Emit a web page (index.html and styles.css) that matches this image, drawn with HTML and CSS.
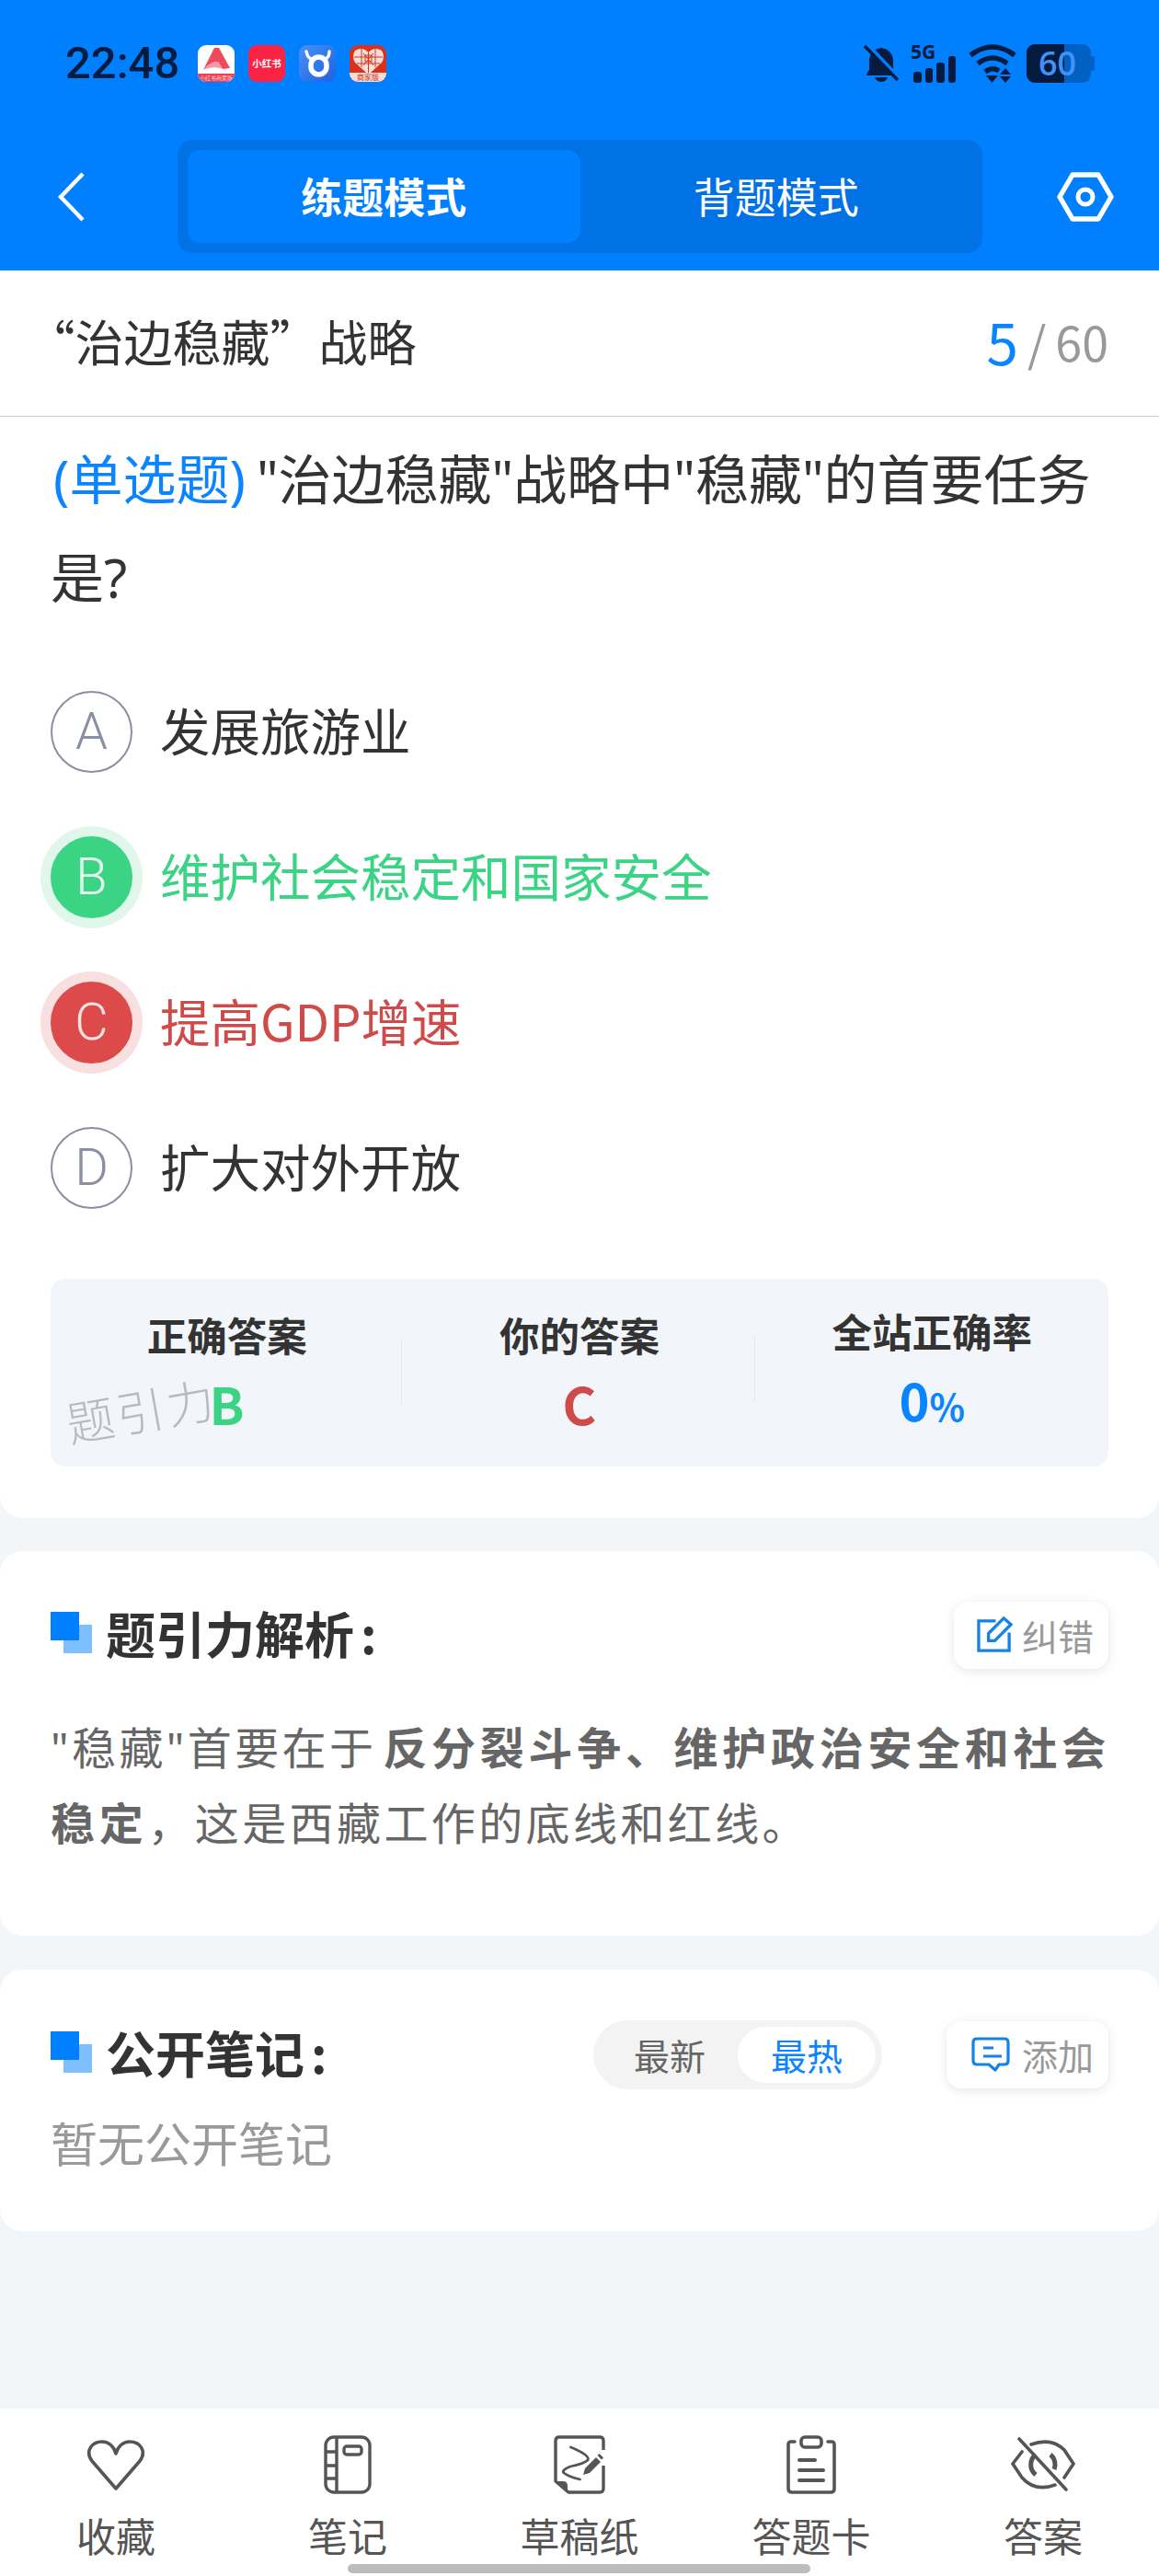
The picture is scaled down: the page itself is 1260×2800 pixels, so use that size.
FILE: index.html
```html
<!DOCTYPE html>
<html lang="zh-CN">
<head>
    <meta charset="UTF-8">
    <meta name="viewport" content="width=device-width, initial-scale=1.0">
    <title>练题模式</title>
    <link rel="stylesheet" href="styles.css">
</head>
<body>
<div class="app">
    <header class="top">
        <div class="status-bar">
            <span class="clock">22:48</span>
            <div class="app-icons">
                <span class="app-icon icon-shop">
                    <svg viewBox="0 0 40 40" width="40" height="40">
                        <path d="M6 27 L18 3 L23 3 L35 25 L27 26 L22 18 Q14 18 6 27Z" fill="#ee4a5c"/>
                        <path d="M6 27 Q14 17 22 18 L27 26 Q17 22 6 27Z" fill="#f79aa2"/>
                    </svg>
                    <span class="icon-caption">小红书商家版</span>
                </span>
                <span class="app-icon icon-red">小红书</span>
                <span class="app-icon icon-cow">
                    <svg viewBox="0 0 40 40" width="40" height="40">
                        <path d="M8 7 Q9 13 13 15 M33 7 Q33 13 29 15" fill="none" stroke="#fff" stroke-width="3.4" stroke-linecap="round"/>
                        <rect x="13" y="13" width="17" height="19" rx="8.5" fill="none" stroke="#fff" stroke-width="5.5"/>
                    </svg>
                </span>
                <span class="app-icon icon-pdd">
                    <svg viewBox="0 0 39 39" width="39" height="39">
                        <path d="M19.5 32 L5 19 Q1 12 5 6 Q13 1 19.5 8 Q26 1 34 6 Q38 12 34 19Z" fill="#f6dfd8"/>
                        <g stroke="#d8321f" stroke-width="1" fill="none">
                            <path d="M19.5 8 V32 M4 13 H35 M7 20 H32 M12 4 V24 M27 4 V24 M14 9 L25 22 M25 9 L14 22"/>
                            <rect x="16" y="11" width="7" height="7"/>
                        </g>
                    </svg>
                    <span class="icon-caption pdd-caption">商家版</span>
                </span>
            </div>
            <div class="status-icons">
                <svg class="bell" viewBox="0 0 38 42" width="38" height="42">
                    <path d="M3 34 Q3 31 6 28 V17 Q7 6 19 4 Q31 6 32 17 V28 Q35 31 35 34Z" fill="#021b3f"/>
                    <path d="M12 36 H26 Q24 41 19 41 Q14 41 12 36Z" fill="#021b3f"/>
                    <path d="M3 0 L38 37" stroke="#0080ff" stroke-width="5"/>
                    <path d="M1 2 L37 39" stroke="#021b3f" stroke-width="3.4"/>
                </svg>
                <div class="signal">
                    <span class="five-g">5G</span>
                    <div class="bars">
                        <i class="bar-1"></i><i class="bar-2"></i><i class="bar-3"></i><i class="bar-4"></i>
                    </div>
                </div>
                <svg class="wifi" viewBox="0 0 52 42" width="52" height="42">
                    <g fill="none" stroke="#021b3f" stroke-width="5.5">
                        <path d="M2 12 Q26 -6 50 12"/>
                        <path d="M10 21 Q26 9 42 21"/>
                        <path d="M18 30 Q26 24 33 29"/>
                    </g>
                    <path d="M19 34 H32 L25.5 42Z" fill="#021b3f"/>
                    <path d="M40 26 L46 33 H34Z M34 35 H46 L40 42Z" fill="#021b3f"/>
                </svg>
                <div class="battery">
                    <div class="battery-fill"></div>
                    <span class="battery-text">60</span>
                    <span class="battery-nub"></span>
                </div>
            </div>
        </div>
        <nav class="nav-bar">
            <svg class="back" viewBox="0 0 32 56" width="32" height="56">
                <path d="M28 3 L4 28 L28 53" fill="none" stroke="#fff" stroke-width="4.4"/>
            </svg>
            <div class="mode-tabs">
                <div class="mode-tab active">练题模式</div>
                <div class="mode-tab">背题模式</div>
            </div>
            <svg class="setting" viewBox="0 0 62 56" width="62" height="56">
                <path d="M17 4 H45 L59 28 L45 52 H17 L3 28Z" fill="none" stroke="#fff" stroke-width="5.4" stroke-linejoin="round"/>
                <circle cx="31" cy="28" r="8" fill="none" stroke="#fff" stroke-width="5"/>
            </svg>
        </nav>
    </header>

    <section class="card question-card">
        <div class="title-row">
            <span class="chapter"><span class="quote-open">“</span>治边稳藏”战略</span>
            <span class="progress"><b>5</b><i>/</i>60</span>
        </div>
        <p class="question"><span class="q-type">(单选题)</span> "治边稳藏"战略中"稳藏"的首要任务是?</p>
        <div class="options">
            <div class="option">
                <span class="mark">A</span>
                <span class="option-text">发展旅游业</span>
            </div>
            <div class="option right">
                <span class="mark">B</span>
                <span class="option-text">维护社会稳定和国家安全</span>
            </div>
            <div class="option wrong">
                <span class="mark">C</span>
                <span class="option-text">提高GDP增速</span>
            </div>
            <div class="option">
                <span class="mark">D</span>
                <span class="option-text">扩大对外开放</span>
            </div>
        </div>
        <div class="stats">
            <div class="stat">
                <div class="stat-label">正确答案</div>
                <div class="stat-value green">B</div>
            </div>
            <div class="stat">
                <div class="stat-label">你的答案</div>
                <div class="stat-value red">C</div>
            </div>
            <div class="stat">
                <div class="stat-label">全站正确率</div>
                <div class="stat-value blue">0<small>%</small></div>
            </div>
            <span class="watermark">题引力</span>
        </div>
    </section>

    <section class="card analysis-card">
        <div class="card-head">
            <h2 class="card-title"><span class="squares"></span>题引力解析<span class="colon">:</span></h2>
            <button class="small-btn fix-btn">
                <svg viewBox="0 0 40 40" width="39" height="39">
                    <path d="M21 5 H2 V38 H36 V18" fill="none" stroke="#1482e6" stroke-width="3.4"/>
                    <path d="M13 19 L30 2 L38 9 L20 27 H13Z" fill="none" stroke="#1482e6" stroke-width="3.4"/>
                </svg>
                纠错
            </button>
        </div>
        <p class="analysis">"稳藏"首要在于<b>反分裂斗争、维护政治安全和社会稳定</b>&#xFF0C;这是西藏工作的底线和红线。</p>
    </section>

    <section class="card notes-card">
        <div class="card-head">
            <h2 class="card-title"><span class="squares"></span>公开笔记<span class="colon">:</span></h2>
            <div class="notes-tools">
                <div class="sort-pill">
                    <span class="sort-item">最新</span>
                    <span class="sort-item active">最热</span>
                </div>
                <button class="small-btn add-btn">
                    <svg viewBox="0 0 42 38" width="42" height="38">
                        <path d="M6 2 H36 Q40 2 40 6 V26 Q40 30 36 30 H30 L26 36 L19 30 H6 Q2 30 2 26 V6 Q2 2 6 2Z" fill="none" stroke="#1482e6" stroke-width="3.2" stroke-linejoin="round"/>
                        <path d="M13 12 H24 M13 21 H33" stroke="#1482e6" stroke-width="3.2"/>
                    </svg>
                    添加
                </button>
            </div>
        </div>
        <p class="empty-notes">暂无公开笔记</p>
    </section>

    <footer class="tool-bar">
        <div class="tool">
            <svg viewBox="0 -2 64 56" width="64" height="56">
                <path d="M32 52 L6 22 C-2 11 6 1 17 1 C24 1 30 6 32 14 C34 6 40 1 47 1 C58 1 66 11 58 22Z" fill="none" stroke="#555" stroke-width="3.6" stroke-linejoin="round"/>
            </svg>
            <span>收藏</span>
        </div>
        <div class="tool">
            <svg viewBox="0 0 52 64" width="52" height="64">
                <rect x="2" y="2" width="48" height="60" rx="9" fill="none" stroke="#555" stroke-width="3.4"/>
                <path d="M14 2 V62 M2 18 H14 M2 33 H14 M2 47 H14" stroke="#555" stroke-width="3.4"/>
                <rect x="22" y="12" width="19" height="9" rx="3" fill="none" stroke="#555" stroke-width="3.4"/>
            </svg>
            <span>笔记</span>
        </div>
        <div class="tool">
            <svg viewBox="0 0 56 64" width="56" height="64">
                <path d="M54 16 V6 Q54 2 50 2 H6 Q2 2 2 6 V50 L16 62 H50 Q54 62 54 58 V33" fill="none" stroke="#555" stroke-width="3.4" stroke-linejoin="round"/>
                <path d="M2 50 H10 Q15 50 15 55 V62Z" fill="#555"/>
                <path d="M18.5 13 Q40 22 37 27 Q33 31 18 34 Q8 38 11 41 Q16 45 28.5 48" fill="none" stroke="#555" stroke-width="2.8" stroke-linecap="round"/>
                <path d="M32 43 L34 36 L46 24 L51 29 L39 41Z" fill="#555"/>
                <path d="M48.5 21 L53 25.5" stroke="#555" stroke-width="3"/>
            </svg>
            <span>草稿纸</span>
        </div>
        <div class="tool">
            <svg viewBox="0 0 56 64" width="56" height="64">
                <path d="M10 7 H6 Q3 7 3 10 V58 Q3 62 7 62 H49 Q53 62 53 58 V10 Q53 7 50 7 H46" fill="none" stroke="#555" stroke-width="3.6" stroke-linecap="round"/>
                <rect x="17" y="2" width="22" height="11" rx="4" fill="none" stroke="#555" stroke-width="3.6"/>
                <path d="M15 27 H32 M15 38 H41 M15 49 H41" stroke="#555" stroke-width="4" stroke-linecap="round"/>
            </svg>
            <span>答题卡</span>
        </div>
        <div class="tool">
            <svg viewBox="0 0 70 56" width="70" height="56">
                <path d="M22 6 Q44 -2 58 12 L68 27 L58 42 M48 50 Q26 58 12 42 L2 27 L12 14" fill="none" stroke="#555" stroke-width="3.6" stroke-linecap="round"/>
                <path d="M27 17 A14 14 0 0 0 27 39 M43 17 A14 14 0 0 1 47 33" fill="none" stroke="#555" stroke-width="5"/>
                <path d="M9 0 L60 55" stroke="#555" stroke-width="3.6" stroke-linecap="round"/>
            </svg>
            <span>答案</span>
        </div>
        <span class="home-bar"></span>
    </footer>
</div>
</body>
</html>
```

FILE: styles.css
```css
* {
    box-sizing: border-box;
}
body {
    margin: 0;
    background-color: #f2f6f9;
    color: #333;
    font-family: "Noto Sans CJK SC", "Noto Sans", sans-serif;
}
p, h2 {
    margin: 0;
}
.app {
    display: flex;
    flex-direction: column;
    min-height: 2800px;
}

/* header */
.top {
    height: 294px;
    padding-top: 45px;
    background-color: #0080ff;
}
.status-bar {
    display: flex;
    align-items: center;
    height: 47px;
    padding: 0 74px 0 71px;
}
.clock {
    width: 144px;
    color: #021b3f;
    font-family: Roboto, sans-serif;
    font-size: 49px;
    font-weight: 500;
}
.app-icons {
    display: flex;
    gap: 15px;
}
.app-icon {
    position: relative;
    display: flex;
    align-items: center;
    justify-content: center;
    width: 40px;
    height: 40px;
    border-radius: 9px;
    overflow: hidden;
}
.icon-shop {
    background-color: #fff;
}
.icon-caption {
    position: absolute;
    left: 0;
    right: 0;
    bottom: 0;
    height: 9px;
    background-color: #ee3f52;
    color: #ffd5d9;
    font-size: 6px;
    line-height: 9px;
    text-align: center;
    white-space: nowrap;
}
.icon-red {
    background-color: #fb2343;
    color: #fff;
    font-size: 10.5px;
    font-weight: 700;
    white-space: nowrap;
}
.icon-cow {
    background: linear-gradient(135deg, #4b90f5, #1c62e4);
}
.icon-pdd {
    background-color: #d8321f;
}
.pdd-caption {
    height: 10px;
    background-color: #f6dcd2;
    color: #c8321f;
    font-size: 8px;
    line-height: 10px;
}
.status-icons {
    display: flex;
    align-items: center;
    margin-left: auto;
}
.bell {
    margin-right: 16px;
}
.signal {
    position: relative;
    width: 46px;
    height: 42px;
    margin-right: 14px;
}
.five-g {
    position: absolute;
    left: -3px;
    top: -2px;
    color: #021b3f;
    font-family: "Open Sans", sans-serif;
    font-size: 21px;
    font-weight: 700;
    line-height: 21px;
}
.bars {
    position: absolute;
    left: 0;
    right: 0;
    bottom: 0;
    display: flex;
    align-items: flex-end;
    gap: 4px;
}
.bars i {
    width: 8.5px;
    background-color: #021b3f;
    border-radius: 3px;
}
.bar-1 { height: 12px; }
.bar-2 { height: 16px; }
.bar-3 { height: 22px; }
.bar-4 { height: 29px; }
.wifi {
    margin-right: 11px;
}
.battery {
    position: relative;
    width: 70px;
    height: 42px;
    background-color: #0060c4;
    border-radius: 9px;
}
.battery-fill {
    width: 41px;
    height: 42px;
    background-color: #021b3f;
    border-radius: 9px 0 0 9px;
}
.battery-text {
    position: absolute;
    left: 13px;
    top: 0;
    color: #3f93f5;
    font-family: "Open Sans", sans-serif;
    font-size: 36px;
    font-weight: 600;
    line-height: 42px;
}
.battery-nub {
    position: absolute;
    right: -4px;
    top: 13px;
    width: 4px;
    height: 16px;
    background-color: #0060c4;
    border-radius: 0 3px 3px 0;
}
.nav-bar {
    display: flex;
    align-items: center;
    height: 123px;
    margin-top: 60px;
    padding-left: 62px;
}
.mode-tabs {
    display: flex;
    width: 875px;
    height: 123px;
    margin-left: 99px;
    padding: 11px;
    background-color: #0072e6;
    border-radius: 16px;
}
.mode-tab {
    flex: 1;
    display: flex;
    align-items: center;
    justify-content: center;
    padding-bottom: 3px;
    border-radius: 14px;
    color: #fff;
    font-size: 45px;
}
.mode-tab.active {
    background-color: #0080ff;
    font-weight: 700;
}
.setting {
    margin-left: 81px;
}

/* cards */
.card {
    padding: 0 55px;
    background-color: #fff;
    border-radius: 24px;
}
.question-card {
    height: 1356px;
    border-radius: 0 0 24px 24px;
}
.title-row {
    display: flex;
    align-items: center;
    justify-content: space-between;
    height: 159px;
    margin: 0 -55px;
    padding: 0 55px 6px;
    border-bottom: 1px solid #ccc;
}
.chapter {
    font-size: 53px;
}
.quote-open {
    font-feature-settings: "halt";
}
.progress {
    display: flex;
    align-items: center;
    color: #999;
    font-size: 52px;
}
.progress b {
    color: #0a84ff;
    font-size: 62px;
    font-weight: 400;
}
.progress i {
    margin: 0 10px;
    font-style: normal;
}
.question {
    margin-top: 14px;
    font-family: "Noto Sans", "Noto Sans CJK SC", sans-serif;
    font-size: 58px;
    line-height: 107px;
}
.q-type {
    margin-left: 3px;
    margin-right: -3px;
    color: #0a84ff;
}
.options {
    margin-top: 35px;
}
.option {
    display: flex;
    align-items: center;
    height: 158px;
}
.mark {
    display: flex;
    align-items: center;
    justify-content: center;
    width: 89px;
    height: 89px;
    margin-right: 30px;
    border: 2px solid #8a8fa3;
    border-radius: 50%;
    color: #8a8fa3;
    font-family: Roboto, sans-serif;
    font-size: 56px;
    font-weight: 300;
}
.option-text {
    padding-bottom: 5px;
    font-size: 54.5px;
}
.option.right .mark {
    background-color: #3bd484;
    border-color: #3bd484;
    color: #e6fbf0;
    box-shadow: 0 0 0 11px #e2f7ec;
}
.option.right .option-text {
    color: #3bd484;
}
.option.wrong .mark {
    background-color: #dc4a4a;
    border-color: #dc4a4a;
    color: #fbe3e3;
    box-shadow: 0 0 0 11px #f9e0e0;
}
.option.wrong .option-text {
    color: #d04a4a;
}
.stats {
    position: relative;
    display: flex;
    align-items: center;
    height: 204px;
    margin-top: 42px;
    padding-bottom: 3px;
    background-color: #f2f5f9;
    border-radius: 16px;
}
.stat {
    position: relative;
    flex: 1;
    text-align: center;
}
.stat + .stat::before {
    content: "";
    position: absolute;
    left: -2px;
    top: 36px;
    height: 72px;
    border-left: 1px solid #e4e8ee;
}
.stat-label {
    font-size: 43.5px;
    font-weight: 700;
    line-height: 62px;
}
.stat-value {
    margin-top: 6px;
    font-size: 56px;
    font-weight: 700;
    line-height: 74px;
}
.stat-value small {
    font-size: 40px;
}
.green { color: #3bd484; }
.red { color: #d04a4a; }
.blue { color: #0a84ff; }
.watermark {
    position: absolute;
    left: 16px;
    top: 104px;
    color: #b8babd;
    font-size: 52px;
    font-weight: 300;
    letter-spacing: 3px;
    transform: rotate(-10deg);
}
.analysis-card {
    height: 418px;
    margin-top: 36px;
}
.notes-card {
    height: 284px;
    margin-top: 37px;
}
.card-head {
    display: flex;
    align-items: center;
    justify-content: space-between;
    padding-top: 55px;
}
.card-title {
    display: flex;
    align-items: center;
    padding-bottom: 6px;
    font-size: 54px;
    font-weight: 700;
    line-height: 67px;
}
.colon {
    margin-left: 7px;
}
.squares {
    position: relative;
    width: 45px;
    height: 45px;
    margin-right: 15px;
}
.squares::before,
.squares::after {
    content: "";
    position: absolute;
    width: 31px;
    height: 31px;
}
.squares::before {
    right: 0;
    bottom: 0;
    background-color: #80bfff;
}
.squares::after {
    left: 0;
    top: 0;
    background-color: #0080ff;
}
.small-btn {
    display: flex;
    align-items: center;
    height: 73px;
    padding-bottom: 3px;
    background-color: #fff;
    border: none;
    border-radius: 16px;
    box-shadow: 0 2px 12px rgba(0, 0, 0, 0.1);
    color: #999;
    font-family: inherit;
    font-size: 39px;
}
.fix-btn {
    gap: 10px;
    padding-left: 25px;
    padding-right: 16px;
}
.add-btn {
    gap: 13px;
    padding-left: 27px;
    padding-right: 16px;
}
.analysis {
    margin: 45px -8px 0 0;
    color: #666;
    font-family: "Noto Sans", "Noto Sans CJK SC", sans-serif;
    font-size: 48px;
    line-height: 82px;
    letter-spacing: 3.4px;
}
.analysis b {
    margin-left: 7px;
    font-weight: 700;
    letter-spacing: 4.7px;
}
.notes-tools {
    display: flex;
    align-items: center;
    gap: 70px;
}
.sort-pill {
    display: flex;
    align-items: center;
    height: 75px;
    padding: 0 7px 0 44px;
    background-color: #f3f3f3;
    border-radius: 38px;
    color: #666;
    font-size: 39px;
}
.sort-item {
    line-height: 61px;
}
.sort-item.active {
    margin-left: 35px;
    padding: 0 36px;
    background-color: #fff;
    border-radius: 31px;
    color: #0a84ff;
}
.empty-notes {
    margin-top: 20px;
    color: #999;
    font-size: 51px;
}

/* bottom tools */
.tool-bar {
    position: relative;
    display: flex;
    height: 182px;
    margin-top: auto;
    background-color: #fff;
}
.tool {
    flex: 1;
    display: flex;
    flex-direction: column;
    align-items: center;
    color: #555;
    font-size: 43px;
}
.tool svg {
    height: 64px;
    margin-top: 29px;
}
.tool span {
    margin-top: 13px;
    line-height: 62px;
}
.home-bar {
    position: absolute;
    left: 378px;
    bottom: 3px;
    width: 503px;
    height: 10px;
    background-color: #bdbdbd;
    border-radius: 5px;
}
```
